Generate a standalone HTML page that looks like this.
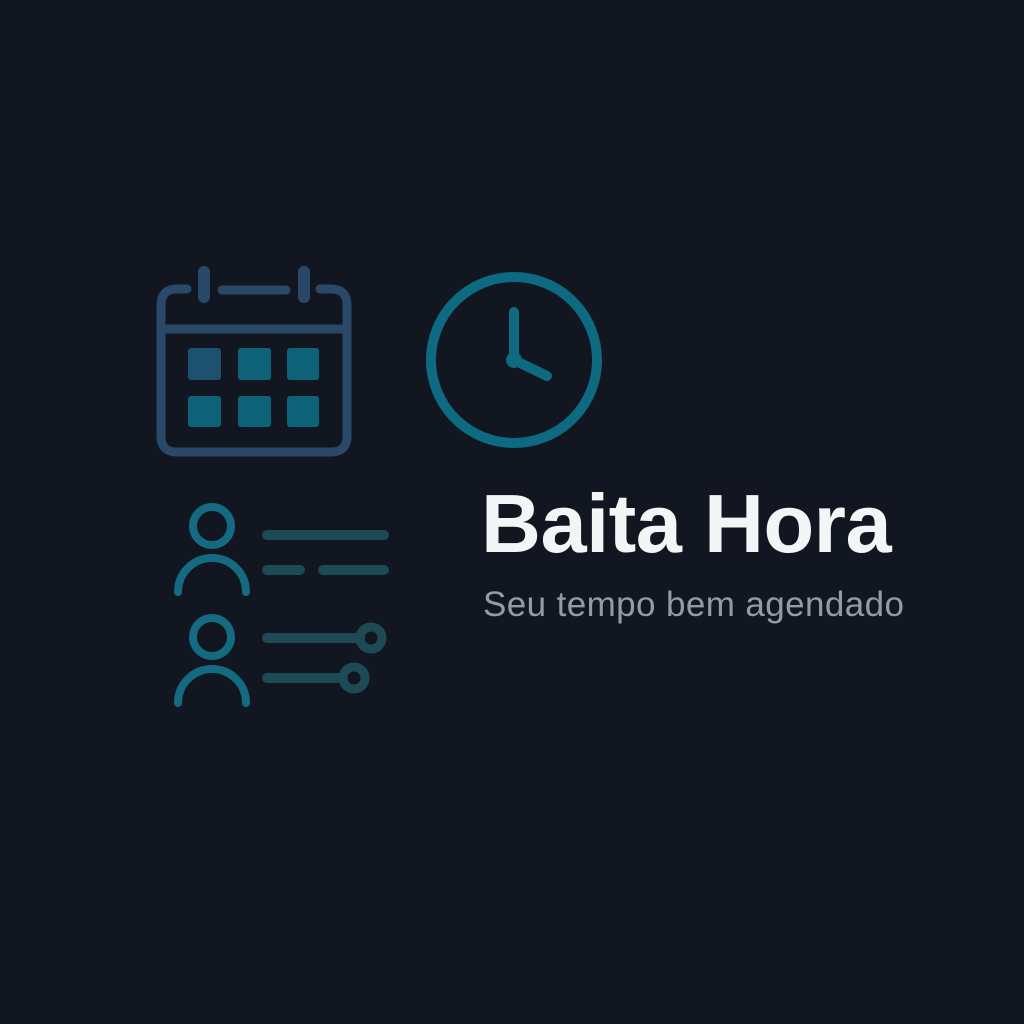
<!DOCTYPE html>
<html><head><meta charset="utf-8"><style>
html,body{margin:0;padding:0;background:#121620;width:1024px;height:1024px;overflow:hidden}
svg{position:absolute;left:0;top:0}
.t{position:absolute;left:481px;font-family:"Liberation Sans",sans-serif;white-space:nowrap}
</style></head><body>
<svg width="1024" height="1024" viewBox="0 0 1024 1024">
<g fill="none" stroke="#2a4868" stroke-width="9" stroke-linecap="round">
<path d="M187 289 H177 Q161 289 161 305 V436 Q161 452 177 452 H331 Q347 452 347 436 V305 Q347 289 331 289 H320"/>
<line x1="161" y1="329" x2="347" y2="329"/>
<line x1="222" y1="290" x2="286" y2="290"/>
<line x1="204" y1="272" x2="204" y2="297" stroke-width="12"/>
<line x1="304" y1="272" x2="304" y2="297" stroke-width="12"/>
</g>
<g fill="#0e6278">
<rect x="188" y="348" width="33" height="32" rx="3" fill="#1c5270"/>
<rect x="238" y="348" width="33" height="32" rx="3"/>
<rect x="287" y="348" width="32" height="32" rx="3"/>
<rect x="188" y="396" width="33" height="31" rx="3"/>
<rect x="238" y="396" width="33" height="31" rx="3"/>
<rect x="287" y="396" width="32" height="31" rx="3"/>
</g>
<g fill="none" stroke="#0e6a80" stroke-width="10" stroke-linecap="round">
<circle cx="514" cy="360" r="83"/>
<line x1="514" y1="312" x2="514" y2="360"/>
<line x1="514" y1="360" x2="547" y2="376"/>
</g>
<circle cx="514" cy="360" r="8" fill="#0e6a80"/>
<g fill="none" stroke="#146a80" stroke-width="8" stroke-linecap="round">
<circle cx="212" cy="526" r="19"/>
<path d="M178 592 A34 34 0 0 1 246 592"/>
<circle cx="212" cy="637" r="19"/>
<path d="M178 703 A34 34 0 0 1 246 703"/>
</g>
<g fill="none" stroke="#1e4a55" stroke-width="10" stroke-linecap="round">
<line x1="267" y1="535" x2="384" y2="535"/>
<line x1="267" y1="570" x2="300" y2="570"/>
<line x1="323" y1="570" x2="384" y2="570"/>
<line x1="267" y1="638" x2="360" y2="638"/>
<line x1="267" y1="678" x2="343" y2="678"/>
<circle cx="371" cy="638" r="11" stroke-width="9"/>
<circle cx="354" cy="678" r="11" stroke-width="9"/>
</g>
</svg>
<div class="t" style="top:476px;font-size:83px;font-weight:bold;color:#f4f5f6;line-height:96px;letter-spacing:-0.5px">Baita Hora</div>
<div class="t" style="top:585px;font-size:35px;color:#939ca6;line-height:40px;letter-spacing:0.4px;left:483px">Seu tempo bem agendado</div>
</body></html>
